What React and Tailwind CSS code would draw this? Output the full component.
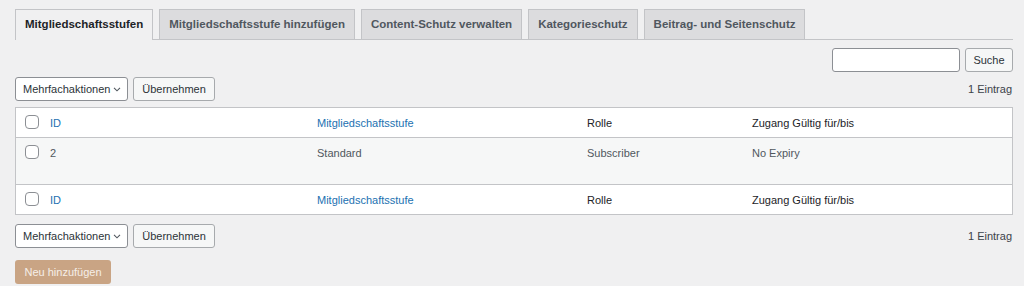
import React from "react";

const tabs = [
  "Mitgliedschaftsstufen",
  "Mitgliedschaftsstufe hinzufügen",
  "Content-Schutz verwalten",
  "Kategorieschutz",
  "Beitrag- und Seitenschutz",
];

function Checkbox() {
  return <span className="block w-[14px] h-[14px] rounded-[4px] border border-[#8c8f94] bg-white" />;
}

function BulkBar() {
  return (
    <div className="flex items-center justify-between">
      <div className="flex items-center gap-[5px]">
        <div className="h-[24px] w-[113px] flex items-center justify-between pl-[7px] pr-[5px] bg-white border border-[#8c8f94] rounded-[3px] text-[11px] text-[#2c3338]">
          <span>Mehrfachaktionen</span>
          <svg width="10" height="10" viewBox="0 0 10 10" fill="none" stroke="#50575e" strokeWidth="1.1">
            <path d="M2 3.8 L5 6.8 L8 3.8" />
          </svg>
        </div>
        <div className="h-[24px] w-[82px] flex items-center justify-center bg-[#f6f7f7] border border-[#a7aaad] rounded-[3px] text-[11px] text-[#2c3338]">
          Übernehmen
        </div>
      </div>
      <span className="text-[11px] text-[#3c434a] pr-[1px]">1 Eintrag</span>
    </div>
  );
}

function Row({ cells, head, alt }) {
  return (
    <div
      className={
        "grid grid-cols-[34px_267px_270px_165px_1fr] items-start " +
        (alt ? "bg-[#f6f7f7] h-[46px] pt-[7px]" : "bg-white h-[29px] pt-[7px]")
      }
    >
      <div className="pl-[9px]">
        <Checkbox />
      </div>
      {cells.map((c, i) => (
        <div
          key={i}
          className={
            "text-[11px] leading-[16px] " +
            (head
              ? i < 2
                ? "text-[#2271b1]"
                : "text-[#1d2327]"
              : "text-[#50575e]")
          }
        >
          {c}
        </div>
      ))}
    </div>
  );
}

export default function App() {
  return (
    <div
      className="w-[1024px] h-[286px] bg-[#f0f0f1] overflow-hidden"
      style={{ fontFamily: '"Liberation Sans", Arial, sans-serif' }}
    >
      <div className="pl-[15px] pr-[11px] pt-[10px]">
        <div className="flex items-end gap-[6px] border-b border-[#c3c4c7] h-[30px]">
          {tabs.map((t, i) => (
            <div
              key={t}
              className={
                "h-[30px] px-[9px] flex items-center text-[11.5px] font-bold border border-b-0 border-[#c3c4c7] " +
                (i === 0
                  ? "bg-[#f0f0f1] text-[#1d2327] mb-[-1px] h-[31px] border-b border-b-[#f0f0f1]"
                  : "bg-[#dcdcde] text-[#50575e]")
              }
            >
              {t}
            </div>
          ))}
        </div>

        <div className="flex justify-end gap-[5px] mt-[8px]">
          <div className="w-[128px] h-[24px] bg-white border border-[#8c8f94] rounded-[3px]" />
          <div className="h-[24px] w-[48px] flex items-center justify-center bg-[#f6f7f7] border border-[#a7aaad] rounded-[3px] text-[11px] text-[#2c3338]">
            Suche
          </div>
        </div>

        <div className="mt-[5px]">
          <BulkBar />
        </div>

        <div className="mt-[6px] border border-[#c3c4c7] w-[998px]">
          <Row head cells={["ID", "Mitgliedschaftsstufe", "Rolle", "Zugang Gültig für/bis"]} />
          <div className="border-t border-[#c3c4c7]">
            <Row alt cells={["2", "Standard", "Subscriber", "No Expiry"]} />
          </div>
          <div className="border-t border-[#c3c4c7]">
            <Row head cells={["ID", "Mitgliedschaftsstufe", "Rolle", "Zugang Gültig für/bis"]} />
          </div>
        </div>

        <div className="mt-[9px]">
          <BulkBar />
        </div>

        <div className="mt-[12px] w-[96px] h-[24px] rounded-[3px] bg-[#c9a484] flex items-center justify-center text-[11px] text-[#f6efe8]">
          Neu hinzufügen
        </div>
      </div>
    </div>
  );
}
